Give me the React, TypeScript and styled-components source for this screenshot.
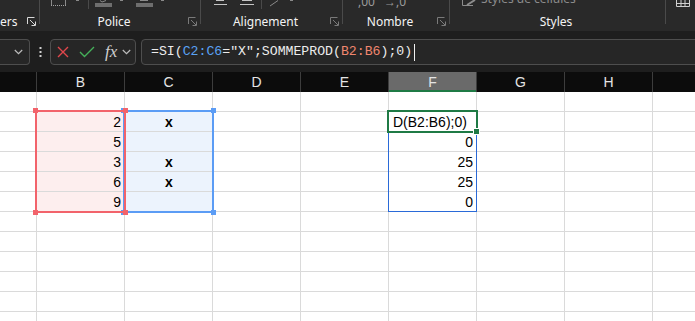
import styled, { createGlobalStyle } from "styled-components";

const GlobalStyle = createGlobalStyle`
  html, body { margin: 0; padding: 0; background: #ffffff; }
  body { font-family: "Liberation Sans", Arial, sans-serif; }
`;

const COLS = ["A", "B", "C", "D", "E", "F", "G", "H", "I"];
const WIDTHS = [37, 88, 88, 88, 88, 88, 88, 88, 88];
const TEMPLATE = WIDTHS.map((w) => `${w}px`).join(" ");
const ROW_H = 20;
const ROWS = 12;

// x of the grid line on the left of a column
const lineX = (col: number) => WIDTHS.slice(0, col).reduce((a, b) => a + b, 0) - 1;
// y (in sheet body) of the grid line above a row
const lineY = (row: number) => (row - 1) * ROW_H - 1;

type CellData = { v: string; align: "left" | "right" | "center"; bold?: boolean };

const cells: Record<string, CellData> = {
  B2: { v: "2", align: "right" },
  B3: { v: "5", align: "right" },
  B4: { v: "3", align: "right" },
  B5: { v: "6", align: "right" },
  B6: { v: "9", align: "right" },
  C2: { v: "x", align: "center", bold: true },
  C4: { v: "x", align: "center", bold: true },
  C5: { v: "x", align: "center", bold: true },
  F2: { v: "D(B2:B6);0)", align: "left" },
  F3: { v: "0", align: "right" },
  F4: { v: "25", align: "right" },
  F5: { v: "25", align: "right" },
  F6: { v: "0", align: "right" },
};

const fillFor = (col: string, row: number) => {
  if (row < 2 || row > 6) return undefined;
  if (col === "B") return "#fdeeee";
  if (col === "C") return "#ecf3fd";
  return undefined;
};

const Page = styled.div`
  width: 695px;
  height: 321px;
  overflow: hidden;
  display: flex;
  flex-direction: column;
  background: #ffffff;
`;

/* ---------- ribbon ---------- */

const Ribbon = styled.div`
  height: 31px;
  flex-shrink: 0;
  background: #292929;
  display: flex;
  align-items: flex-start;
  overflow: hidden;
`;

const Group = styled.div<{ $w: number }>`
  width: ${(p) => p.$w}px;
  height: 31px;
  flex-shrink: 0;
  display: flex;
  flex-direction: column;
`;

const Strip = styled.div`
  height: 9px;
  overflow: hidden;
  display: flex;
  align-items: flex-start;
  color: #8c8c8c;
  font: 12px/14px "Noto Sans", "Open Sans", sans-serif;
`;

const StripText = styled.span<{ $ml: number; $mt: number; $color?: string }>`
  margin-left: ${(p) => p.$ml}px;
  margin-top: ${(p) => p.$mt}px;
  color: ${(p) => p.$color ?? "#8c8c8c"};
  white-space: nowrap;
`;

const LabelRow = styled.div`
  flex: 1;
  display: flex;
  align-items: center;
  padding: 2px 3px 0 0;
`;

const GroupLabel = styled.span<{ $align?: "left" | "center" }>`
  flex: 1;
  text-align: ${(p) => p.$align ?? "center"};
  color: #f4f4f4;
  font: 12px "Noto Sans", "Open Sans", sans-serif;
  white-space: nowrap;
`;

const Sep = styled.div`
  width: 1px;
  height: 24px;
  flex-shrink: 0;
  background: #4a4a4a;
`;

const Launcher = ({ light }: { light?: boolean }) => (
  <svg width="9" height="9" viewBox="0 0 9 9" fill="none" stroke={light ? "#d8d8d8" : "#7a7a7a"} strokeWidth="1">
    <path d="M0.5 7V0.5H7.5" />
    <path d="M3 3L8 8" />
    <path d="M8.5 4.5V8.5H4.5" />
  </svg>
);

/* ---------- formula bar ---------- */

const FormulaRow = styled.div`
  height: 41px;
  flex-shrink: 0;
  box-sizing: border-box;
  background: #1e1e1e;
  display: flex;
  align-items: flex-start;
  padding-top: 8px;
`;

const Box = styled.div`
  height: 26px;
  box-sizing: border-box;
  border: 1px solid #4e4e4e;
  border-radius: 4px;
  background: #262626;
  display: flex;
  align-items: center;
`;

const NameBox = styled(Box)`
  width: 30px;
  border-left: none;
  border-radius: 0 4px 4px 0;
  justify-content: flex-end;
  padding-right: 6px;
`;

const Dots = styled.div`
  width: 20px;
  height: 26px;
  display: flex;
  align-items: center;
  justify-content: center;
`;

const ButtonsBox = styled(Box)`
  width: 86px;
  padding-left: 6px;
`;

const Fx = styled.span`
  margin-left: 10px;
  font: italic 17px/20px "Liberation Serif", "DejaVu Serif", serif;
  color: #d0d0d0;
`;

const FormulaBox = styled(Box)`
  flex: 1;
  margin: 0 -6px 0 5px;
  padding-left: 9px;
  font: 13.2px/24px "Liberation Mono", "DejaVu Sans Mono", monospace;
  color: #ececec;
  white-space: pre;
`;

const Ref = styled.span<{ $color: string }>`
  color: ${(p) => p.$color};
`;

const Caret = styled.span`
  display: inline-block;
  width: 1px;
  height: 17px;
  margin-left: 2px;
  background: #f0f0f0;
  vertical-align: middle;
`;

const Chevron = () => (
  <svg width="9" height="6" viewBox="0 0 9 6" fill="none" stroke="#bdbdbd" strokeWidth="1.2">
    <path d="M0.8 1L4.5 4.7L8.2 1" />
  </svg>
);

/* ---------- sheet ---------- */

const HeaderRow = styled.div`
  display: grid;
  grid-template-columns: ${TEMPLATE};
  height: 20px;
  flex-shrink: 0;
  background: #0c0c0c;
`;

const ColHead = styled.div<{ $active?: boolean }>`
  box-sizing: border-box;
  border-right: 1px solid #3d3d3d;
  background: ${(p) => (p.$active ? "#6a6a6a" : "transparent")};
  box-shadow: ${(p) => (p.$active ? "inset 0 -2px 0 #1f7a45" : "none")};
  color: #e4e4e4;
  font: 14px/20px "Liberation Sans", Arial, sans-serif;
  text-align: center;
`;

const Body = styled.div`
  position: relative;
  flex: 1;
  overflow: hidden;
  display: grid;
  grid-template-columns: ${TEMPLATE};
  grid-auto-rows: ${ROW_H}px;
`;

const Cell = styled.div<{ $fill?: string; $align: string; $bold?: boolean }>`
  box-sizing: border-box;
  border-right: 1px solid #dadada;
  border-bottom: 1px solid #dadada;
  background: ${(p) => p.$fill ?? "#ffffff"};
  color: #000000;
  font: ${(p) => (p.$bold ? 700 : 400)} 14px/21px "Liberation Sans", Arial, sans-serif;
  text-align: ${(p) => p.$align};
  padding: 0 3px 0 4px;
  white-space: nowrap;
  overflow: hidden;
`;

const RangeBox = styled.div<{ $color: string; $w: number }>`
  position: absolute;
  box-sizing: border-box;
  border: ${(p) => p.$w}px solid ${(p) => p.$color};
  pointer-events: none;
`;

const Handle = styled.span<{ $color: string; $h: "l" | "r"; $v: "t" | "b" }>`
  position: absolute;
  width: 5px;
  height: 5px;
  background: ${(p) => p.$color};
  ${(p) => (p.$h === "l" ? "left: -4px;" : "right: -4px;")}
  ${(p) => (p.$v === "t" ? "top: -4px;" : "bottom: -4px;")}
`;

const FillHandle = styled.span`
  position: absolute;
  width: 5px;
  height: 5px;
  right: -4px;
  bottom: -4px;
  background: #1f7a45;
  border: 1px solid #ffffff;
`;

type RangeProps = {
  c1: number;
  c2: number;
  r1: number;
  r2: number;
  color: string;
  w?: number;
  handles?: boolean;
  fill?: boolean;
};

const Range = ({ c1, c2, r1, r2, color, w = 2, handles, fill }: RangeProps) => {
  const off = w === 2 ? 1 : 0;
  const left = lineX(c1) - off;
  const top = lineY(r1) - off;
  const width = lineX(c2 + 1) - lineX(c1) + 1 + off * 2;
  const height = lineY(r2 + 1) - lineY(r1) + 1 + off * 2;
  return (
    <RangeBox $color={color} $w={w} style={{ left, top, width, height }}>
      {handles && (
        <>
          <Handle $color={color} $h="l" $v="t" />
          <Handle $color={color} $h="r" $v="t" />
          <Handle $color={color} $h="l" $v="b" />
          <Handle $color={color} $h="r" $v="b" />
        </>
      )}
      {fill && <FillHandle />}
    </RangeBox>
  );
};

export default function App() {
  const rows = Array.from({ length: ROWS }, (_, i) => i + 1);
  return (
    <>
      <GlobalStyle />
      <Page>
        <Ribbon>
          <Group $w={39}>
            <Strip />
            <LabelRow>
              <GroupLabel $align="left">ers</GroupLabel>
              <Launcher light />
            </LabelRow>
          </Group>
          <Sep />
          <Group $w={160}>
            <Strip>
              <svg width="160" height="9" viewBox="0 0 160 9" fill="none">
                <path d="M11.5 0V5.5M25.5 0V5.5" stroke="#8a8a8a" />
                <path d="M11 5.5H26" stroke="#a0a0a0" strokeDasharray="1 1" />
                <path d="M36 0.5H39" stroke="#8a8a8a" />
                <path d="M48.5 0V10" stroke="#4a4a4a" />
                <path d="M60 0.5L62 2L66 0.5" stroke="#8a8a8a" />
                <rect x="55" y="3" width="17" height="4" fill="#6e6e6e" />
                <path d="M80 0.5H83" stroke="#8a8a8a" />
                <path d="M100 0.5H108" stroke="#8a8a8a" />
                <rect x="96" y="3" width="17" height="4" fill="#6e6e6e" />
                <path d="M121 0.5H124" stroke="#8a8a8a" />
              </svg>
            </Strip>
            <LabelRow>
              <GroupLabel>Police</GroupLabel>
              <Launcher />
            </LabelRow>
          </Group>
          <Sep />
          <Group $w={141}>
            <Strip>
              <svg width="141" height="9" viewBox="0 0 141 9" fill="none" stroke="#c4c4c4">
                <path d="M15 0.5H23M13 4.5H26" />
                <path d="M41 0.5H51M39 4.5H53" />
                <path d="M60.5 0V10" stroke="#4a4a4a" />
                <path d="M69 6L77 0.5" stroke="#8a8a8a" />
                <path d="M89 0.5H92" stroke="#8a8a8a" />
              </svg>
            </Strip>
            <LabelRow>
              <GroupLabel>Alignement</GroupLabel>
              <Launcher />
            </LabelRow>
          </Group>
          <Sep />
          <Group $w={106}>
            <Strip>
              <StripText $ml={15} $mt={-5} $color="#9a9a9a">,00</StripText>
              <StripText $ml={9} $mt={-5} $color="#9a9a9a">→,0</StripText>
            </Strip>
            <LabelRow>
              <GroupLabel>Nombre</GroupLabel>
              <Launcher />
            </LabelRow>
          </Group>
          <Sep />
          <Group $w={215}>
            <Strip>
              <svg width="30" height="9" viewBox="0 0 30 9" fill="none" stroke="#8c8c8c" style={{ marginLeft: 11 }}>
                <path d="M1.5 0V5.5H12" />
                <path d="M6 5L14 0" strokeWidth="2" />
              </svg>
              <StripText $ml={-10} $mt={-8}>Styles de cellules ˅</StripText>
            </Strip>
            <LabelRow>
              <GroupLabel>Styles</GroupLabel>
            </LabelRow>
          </Group>
          <Sep />
          <Group $w={28}>
            <Strip>
              <svg width="28" height="9" viewBox="0 0 28 9" fill="none" stroke="#cfcfcf">
                <path d="M10.5 0V6.5H23.5V0M10.5 3.5H23.5M15 0V6.5M19 0V6.5" />
              </svg>
            </Strip>
          </Group>
        </Ribbon>

        <FormulaRow>
          <NameBox>
            <Chevron />
          </NameBox>
          <Dots>
            <svg width="3" height="10" viewBox="0 0 3 10" fill="#cfcfcf">
              <rect x="0.5" y="0" width="2" height="2" />
              <rect x="0.5" y="4" width="2" height="2" />
              <rect x="0.5" y="8" width="2" height="2" />
            </svg>
          </Dots>
          <ButtonsBox>
            <svg width="12" height="12" viewBox="0 0 12 12" fill="none" stroke="#e0474c" strokeWidth="1.4">
              <path d="M1 1L11 11M11 1L1 11" />
            </svg>
            <svg width="16" height="12" viewBox="0 0 16 12" fill="none" stroke="#45b05a" strokeWidth="1.4" style={{ marginLeft: 10 }}>
              <path d="M1 6L5.5 10.5L15 1" />
            </svg>
            <Fx>fx</Fx>
            <span style={{ marginLeft: 5, display: "flex" }}>
              <Chevron />
            </span>
          </ButtonsBox>
          <FormulaBox>
            =SI(<Ref $color="#5aa2f5">C2:C6</Ref>="X";SOMMEPROD(<Ref $color="#f0876f">B2:B6</Ref>);0)
            <Caret />
          </FormulaBox>
        </FormulaRow>

        <HeaderRow>
          {COLS.map((c) => (
            <ColHead key={c} $active={c === "F"}>
              {c === "A" ? "" : c}
            </ColHead>
          ))}
        </HeaderRow>

        <Body>
          {rows.map((r) =>
            COLS.map((c) => {
              const d = cells[`${c}${r}`];
              return (
                <Cell key={`${c}${r}`} $fill={fillFor(c, r)} $align={d?.align ?? "left"} $bold={d?.bold}>
                  {d?.v}
                </Cell>
              );
            })
          )}
          <Range c1={2} c2={2} r1={2} r2={6} color="#5b9cf5" handles />
          <Range c1={1} c2={1} r1={2} r2={6} color="#f2636b" handles />
          <Range c1={5} c2={5} r1={3} r2={6} color="#2a6ad8" w={1} />
          <Range c1={5} c2={5} r1={2} r2={2} color="#1f7a45" fill />
        </Body>
      </Page>
    </>
  );
}
